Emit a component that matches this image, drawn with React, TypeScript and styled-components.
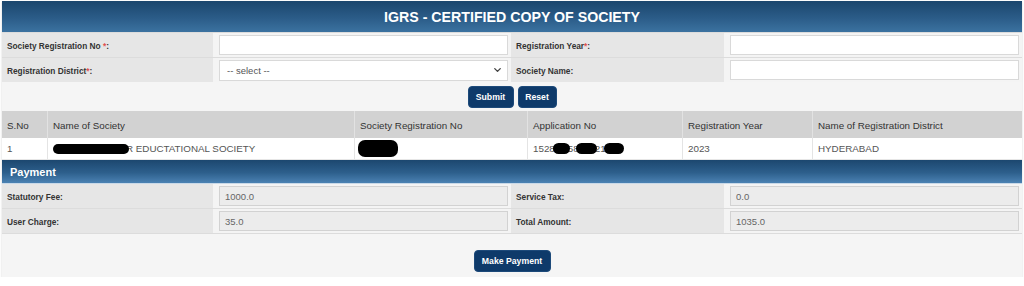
import React from "react";
import styled, { createGlobalStyle } from "styled-components";
import { ChevronDown } from "lucide-react";

const Global = createGlobalStyle`
  html, body { margin: 0; padding: 0; background: #ffffff; }
  body { font-family: "Liberation Sans", Arial, sans-serif; }
  * { box-sizing: border-box; }
`;

const Page = styled.div`
  padding: 1px 2px 0 2px;
  width: 1024px;
`;

const Panel = styled.div`
  background: #f5f5f5;
  box-shadow: 0 1px 2px rgba(0, 0, 0, 0.18);
`;

const TitleBar = styled.div`
  height: 31px;
  display: flex;
  align-items: center;
  justify-content: center;
  background: linear-gradient(to bottom, #1b466d 0%, #2b5c88 55%, #3b72a0 100%);
  color: #ffffff;
  font-weight: 700;
  font-size: 14.2px;
`;

const FormGrid = styled.div`
  display: grid;
  grid-template-columns: 211px 298px 213px 298px;
  grid-auto-rows: 24px;
  row-gap: 1px;
  background: #dcdcdc;
  padding-top: 1px;
`;

const LabelCell = styled.div`
  background: #e6e6e6;
  display: flex;
  align-items: center;
  padding: 2px 0 0 5px;
  font-size: 8.3px;
  font-weight: 700;
  color: #333333;
`;

const Req = styled.span`
  color: #e05050;
`;

const InputCell = styled.div`
  background: #f4f4f4;
  display: flex;
  align-items: center;
  padding: 0 3px 0 6px;
  position: relative;
`;

const TextInput = styled.input<{ $ro?: boolean }>`
  width: 100%;
  height: 20px;
  border: 1px solid ${(p) => (p.$ro ? "#d2d2d2" : "#d9d9d9")};
  background: ${(p) => (p.$ro ? "#ececec" : "#ffffff")};
  color: #666666;
  font-family: "Liberation Sans", Arial, sans-serif;
  font-size: 9.5px;
  padding: 0 5px;
  outline: none;
`;

const Select = styled.select`
  width: 100%;
  height: 21px;
  border: 1px solid #d9d9d9;
  background: #ffffff;
  color: #555555;
  font-family: "Liberation Sans", Arial, sans-serif;
  font-size: 9.5px;
  padding: 0 7px;
  appearance: none;
  -webkit-appearance: none;
  outline: none;
`;

const Chevron = styled(ChevronDown)`
  position: absolute;
  right: 8px;
  top: 50%;
  transform: translateY(-50%);
  color: #444444;
  pointer-events: none;
`;

const ButtonRow = styled.div<{ $pt: number; $pb: number }>`
  padding: ${(p) => p.$pt}px 0 ${(p) => p.$pb}px;
  display: flex;
  align-items: flex-start;
  justify-content: center;
  gap: 4px;
  background: #f5f5f5;
`;

const Btn = styled.button<{ $w: number }>`
  width: ${(p) => p.$w}px;
  height: 22px;
  border: 1px solid #1d4a7a;
  border-radius: 4px;
  background: #0e3a6a;
  color: #ffffff;
  font-family: "Liberation Sans", Arial, sans-serif;
  font-weight: 700;
  font-size: 8.7px;
  padding: 0;
`;

const COLS = "45px 307px 173px 155px 130px 210px";

const TableHead = styled.div`
  display: grid;
  grid-template-columns: ${COLS};
  height: 27px;
  background: #d2d2d2;
`;

const HeadCell = styled.div`
  display: flex;
  align-items: center;
  padding: 2px 0 0 5px;
  font-size: 9.8px;
  color: #333333;
  border-left: 1px solid #e2e2e2;
  &:first-child { border-left: none; }
`;

const TableRow = styled.div`
  display: grid;
  grid-template-columns: ${COLS};
  height: 22px;
  background: #ffffff;
  border-bottom: 1px solid #e6e6e6;
`;

const Cell = styled.div`
  display: flex;
  align-items: center;
  padding-left: 5px;
  font-size: 9.8px;
  color: #555555;
  border-left: 1px solid #e4e4e4;
  white-space: nowrap;
  &:first-child { border-left: none; }
`;

const Blot = styled.span<{ $w: number; $h: number; $ml?: number }>`
  display: inline-block;
  width: ${(p) => p.$w}px;
  height: ${(p) => p.$h}px;
  margin-left: ${(p) => p.$ml ?? 0}px;
  background: #000000;
  border-radius: ${(p) => Math.min(p.$h / 2, 7)}px;
  position: relative;
  z-index: 1;
`;

const Tail = styled.span<{ $ml: number }>`
  margin-left: ${(p) => p.$ml}px;
`;

const SectionBar = styled.div`
  height: 24px;
  display: flex;
  align-items: center;
  padding-left: 8px;
  background: linear-gradient(to bottom, #1c476f 0%, #2d5f8c 55%, #4b82b3 100%);
  border-bottom: 1px solid #c9d9e8;
  color: #ffffff;
  font-weight: 700;
  font-size: 11px;
`;

const PayGrid = styled(FormGrid)`
  grid-auto-rows: 24px;
  padding-top: 0;
  padding-bottom: 1px;
`;

export default function App() {
  return (
    <>
      <Global />
      <Page>
        <Panel>
          <TitleBar>IGRS - CERTIFIED COPY OF SOCIETY</TitleBar>
          <FormGrid>
            <LabelCell>
              Society Registration No&nbsp;<Req>*</Req>:
            </LabelCell>
            <InputCell>
              <TextInput />
            </InputCell>
            <LabelCell>
              Registration Year<Req>*</Req>:
            </LabelCell>
            <InputCell>
              <TextInput />
            </InputCell>
            <LabelCell>
              Registration District<Req>*</Req>:
            </LabelCell>
            <InputCell>
              <Select defaultValue="">
                <option value="">-- select --</option>
              </Select>
              <Chevron size={11} strokeWidth={3} />
            </InputCell>
            <LabelCell>Society Name:</LabelCell>
            <InputCell>
              <TextInput />
            </InputCell>
          </FormGrid>
          <ButtonRow $pt={4} $pb={3}>
            <Btn $w={46}>Submit</Btn>
            <Btn $w={39}>Reset</Btn>
          </ButtonRow>
          <TableHead>
            <HeadCell>S.No</HeadCell>
            <HeadCell>Name of Society</HeadCell>
            <HeadCell>Society Registration No</HeadCell>
            <HeadCell>Application No</HeadCell>
            <HeadCell>Registration Year</HeadCell>
            <HeadCell>Name of Registration District</HeadCell>
          </TableHead>
          <TableRow>
            <Cell>1</Cell>
            <Cell>
              <Blot $w={76} $h={10} />
              <Tail $ml={-3}>R EDUCTATIONAL SOCIETY</Tail>
            </Cell>
            <Cell>
              <Blot $w={40} $h={17} $ml={-2} />
            </Cell>
            <Cell>
              1528
              <Blot $w={17} $h={11} $ml={-2} />
              <Tail $ml={-2}>58</Tail>
              <Blot $w={21} $h={11} $ml={-3} />
              <Tail $ml={-2}>21</Tail>
              <Blot $w={20} $h={11} $ml={-2} />
            </Cell>
            <Cell>2023</Cell>
            <Cell>HYDERABAD</Cell>
          </TableRow>
          <SectionBar>Payment</SectionBar>
          <PayGrid>
            <LabelCell>Statutory Fee:</LabelCell>
            <InputCell>
              <TextInput $ro readOnly value="1000.0" />
            </InputCell>
            <LabelCell>Service Tax:</LabelCell>
            <InputCell>
              <TextInput $ro readOnly value="0.0" />
            </InputCell>
            <LabelCell>User Charge:</LabelCell>
            <InputCell>
              <TextInput $ro readOnly value="35.0" />
            </InputCell>
            <LabelCell>Total Amount:</LabelCell>
            <InputCell>
              <TextInput $ro readOnly value="1035.0" />
            </InputCell>
          </PayGrid>
          <ButtonRow $pt={16} $pb={5}>
            <Btn $w={77}>Make Payment</Btn>
          </ButtonRow>
        </Panel>
      </Page>
    </>
  );
}
